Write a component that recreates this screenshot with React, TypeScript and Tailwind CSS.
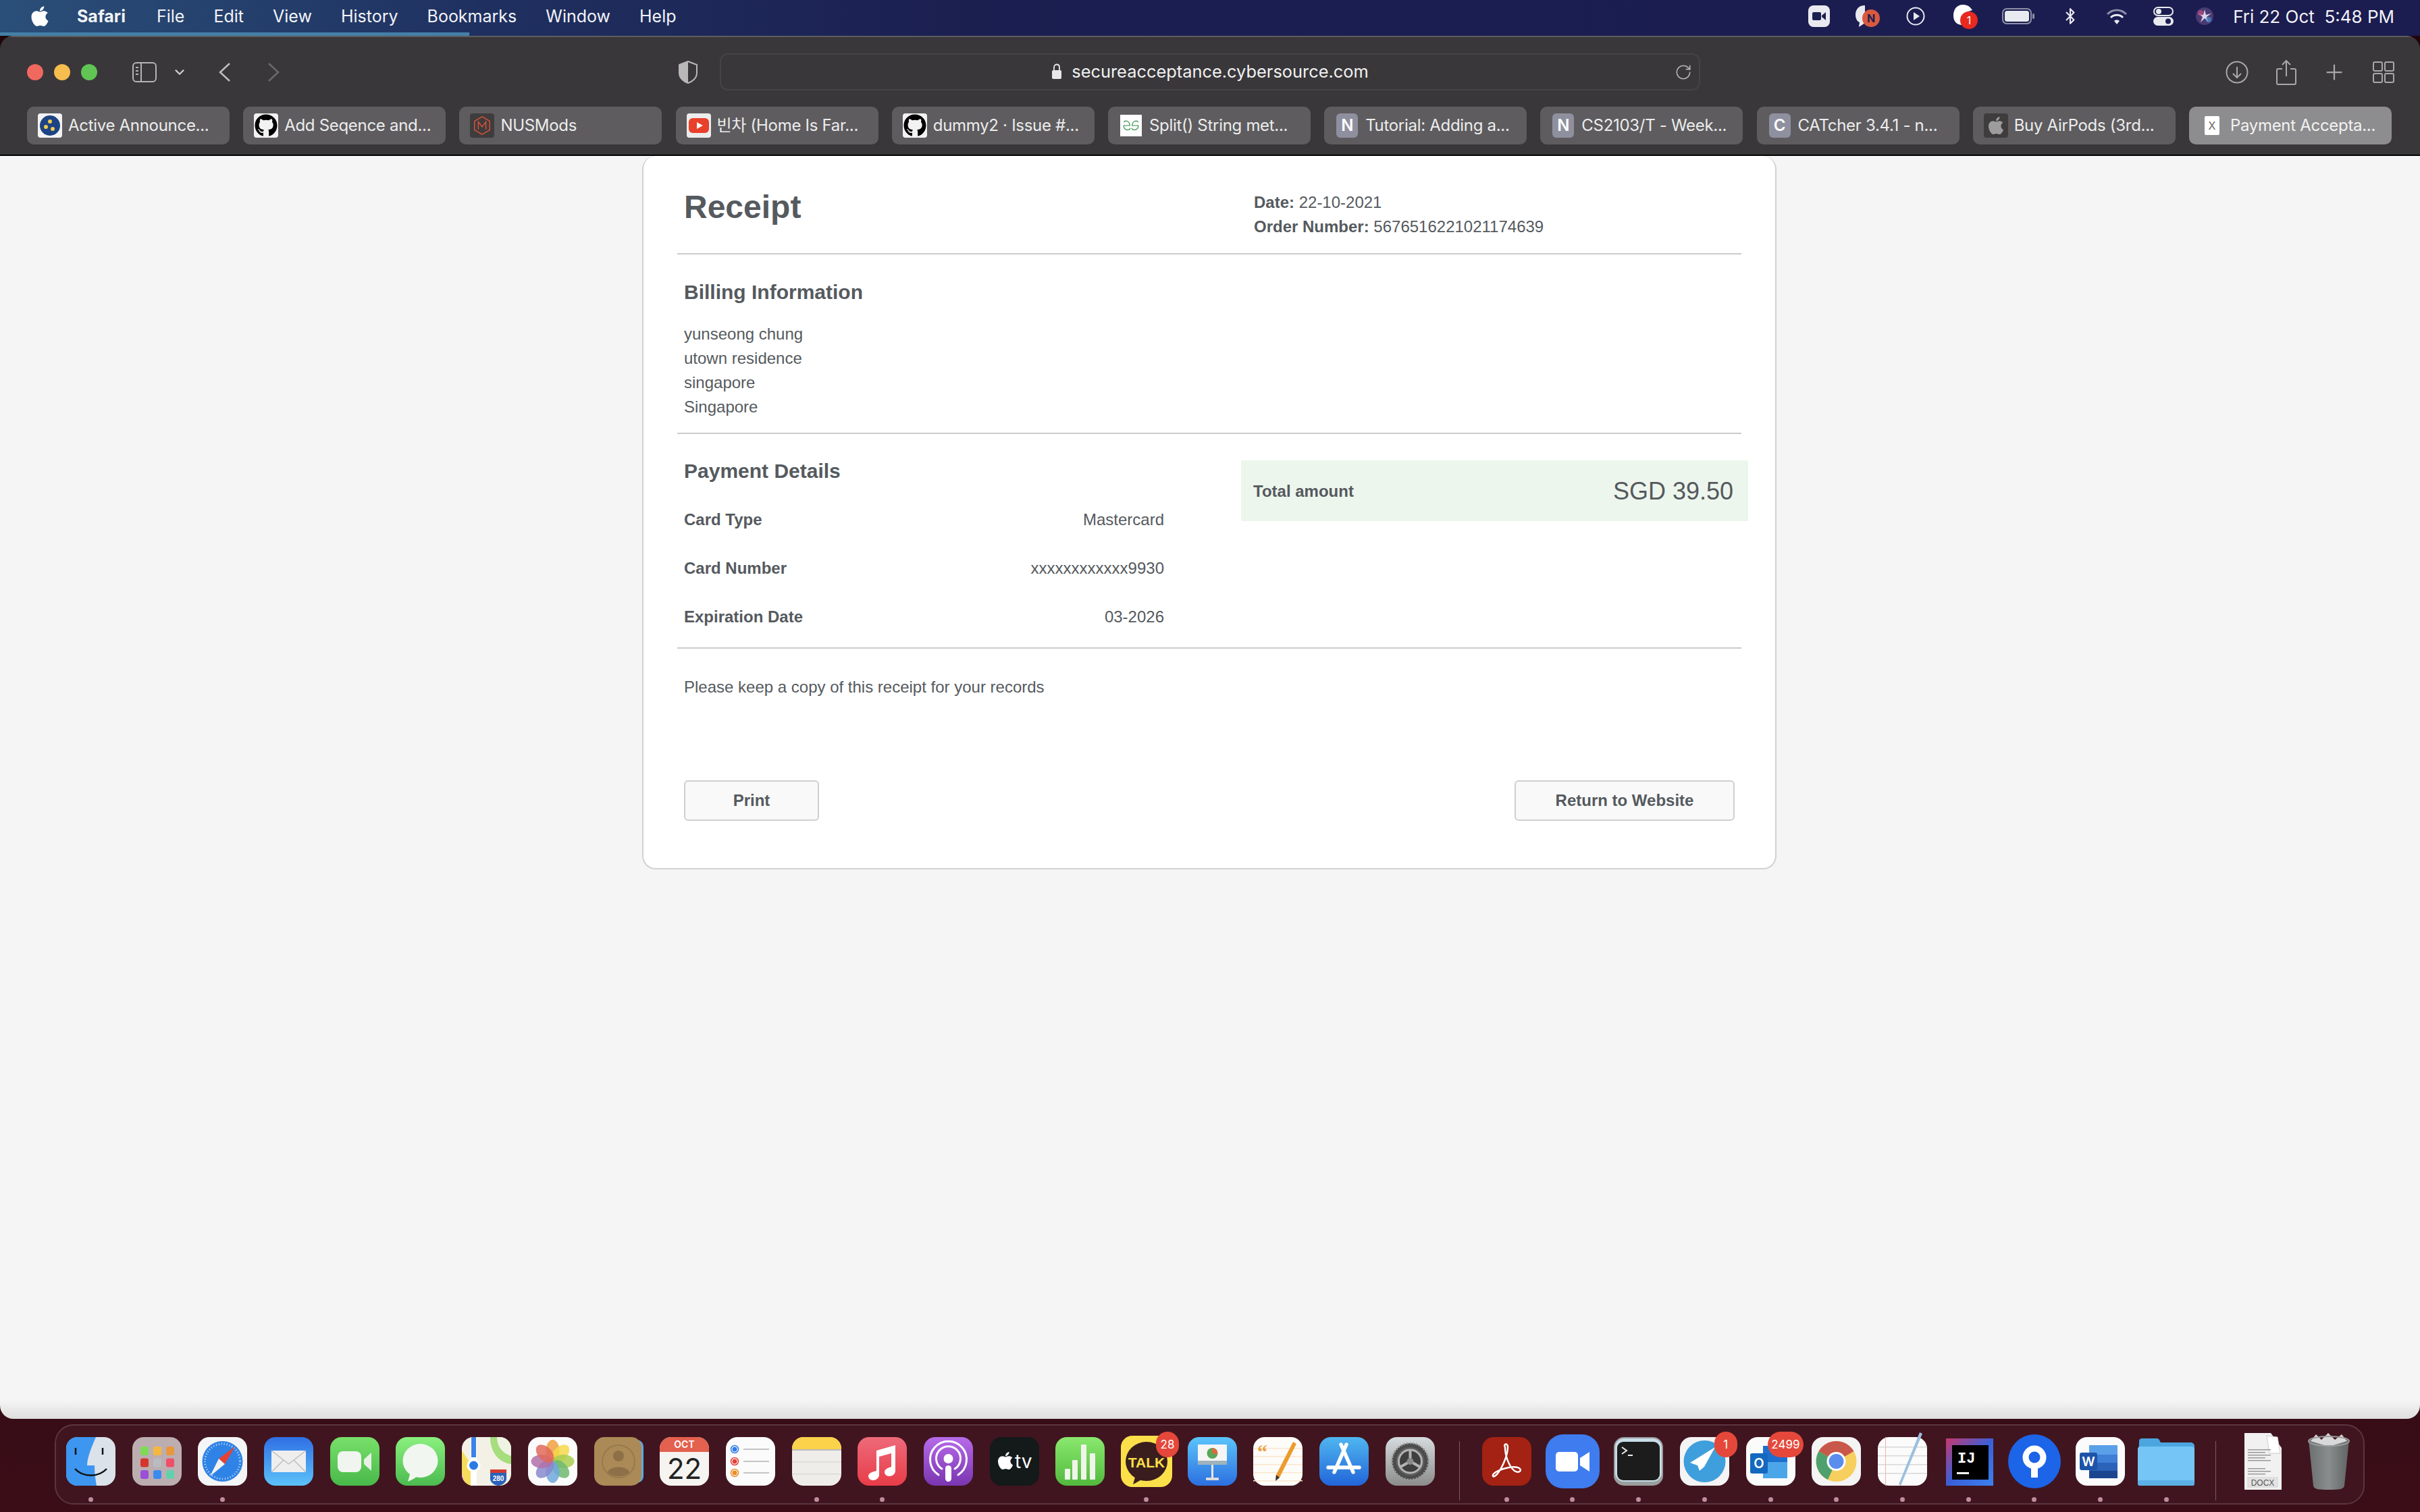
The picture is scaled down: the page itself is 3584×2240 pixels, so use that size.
import type { ReactNode } from "react";
import { FaApple, FaGithub } from "react-icons/fa";
import { Bluetooth, ChevronDown, Plus, RotateCw } from "lucide-react";

const Squircle = ({ fill, children }: { fill: string; children?: ReactNode }) => (
  <svg viewBox="0 0 73 72" className="w-[73px] h-[72px] overflow-visible">
    <rect x="0" y="0" width="73" height="72" rx="17" fill={fill} />
    {children}
  </svg>
);

const Grad = ({ id, from, to }: { id: string; from: string; to: string }) => (
  <defs>
    <linearGradient id={id} x1="0" y1="0" x2="0" y2="1">
      <stop offset="0" stopColor={from} />
      <stop offset="1" stopColor={to} />
    </linearGradient>
  </defs>
);

const Finder = () => (
  <svg viewBox="0 0 73 72" className="w-[73px] h-[72px]">
    <rect width="73" height="72" rx="17" fill="#dbe2ea" />
    <path d="M17 0H44C38 14 31 30 31 42H42C42 52 43 62 45 72H17C7 72 0 65 0 55V17C0 7 7 0 17 0Z" fill="#3d96f0" />
    <path d="M14 16v10M54 16v10" stroke="#111" strokeWidth="2.5" />
    <path d="M13 47C25 60 48 60 60 47" stroke="#111" strokeWidth="2.5" fill="none" />
  </svg>
);

const Launchpad = () => {
  const cells = ["#7ed957", "#f5b73d", "#e9973c", "#d5362c", "#b8bcc0", "#ee5068", "#9a50d8", "#3a8cf0", "#63d0ac"];
  return (
    <Squircle fill="#bcaeb0">
      {cells.map((c, i) => (
        <rect key={c} x={12 + (i % 3) * 19} y={14 + Math.floor(i / 3) * 17.5} width="12" height="13" rx="3" fill={c} />
      ))}
    </Squircle>
  );
};

const SafariIcon = () => (
  <Squircle fill="#f4f5f6">
    <circle cx="36.5" cy="36" r="30" fill="#2f83e6" />
    <circle cx="36.5" cy="36" r="26" fill="none" stroke="#cfe3fa" strokeWidth="3" strokeDasharray="1 3" />
    <path d="M55 14L31 32L40 40Z" fill="#ea3f34" />
    <path d="M18 58L31 32L40 40Z" fill="#f3f3f3" />
  </Squircle>
);

const Mail = () => (
  <svg viewBox="0 0 73 72" className="w-[73px] h-[72px]">
    <Grad id="mailG" from="#2f6fe4" to="#5cc2fa" />
    <rect width="73" height="72" rx="17" fill="url(#mailG)" />
    <rect x="11" y="20" width="51" height="32" rx="2" fill="#eeeeee" />
    <path d="M11 20L36.5 40L62 20M11 52L29 34M62 52L44 34" stroke="#b9b9b9" strokeWidth="1.2" fill="none" />
  </svg>
);

const FaceTime = () => (
  <svg viewBox="0 0 73 72" className="w-[73px] h-[72px]">
    <Grad id="ftG" from="#78e06a" to="#48b94a" />
    <rect width="73" height="72" rx="17" fill="url(#ftG)" />
    <rect x="11" y="21" width="35" height="31" rx="8" fill="#f1f5f0" />
    <path d="M50 33L61 23V50L50 40Z" fill="#e8f0e6" />
  </svg>
);

const Messages = () => (
  <svg viewBox="0 0 73 72" className="w-[73px] h-[72px]">
    <Grad id="msgG" from="#8af07e" to="#4cbb50" />
    <rect width="73" height="72" rx="17" fill="url(#msgG)" />
    <ellipse cx="36.5" cy="35" rx="26" ry="25" fill="#f2f6f0" />
    <path d="M22 52L18 66C25 63 30 60 33 57Z" fill="#f2f6f0" />
  </svg>
);

const Maps = () => (
  <svg viewBox="0 0 73 72" className="w-[73px] h-[72px]">
    <clipPath id="mapC"><rect width="73" height="72" rx="17" /></clipPath>
    <g clipPath="url(#mapC)">
      <rect width="73" height="72" fill="#f3f1e6" />
      <path d="M42 0H73V40C56 38 42 24 42 0Z" fill="#a6dd7d" />
      <path d="M52 0H73V28C60 24 52 14 52 0Z" fill="#eff3e3" />
      <path d="M0 20L16 44V72H0Z" fill="#f6dc5c" />
      <path d="M0 52L6 72H0Z" fill="#f7b8c4" />
      <rect x="13" y="0" width="9" height="72" fill="#fff" />
      <rect x="14" y="0" width="7" height="30" fill="#3b82e8" />
      <circle cx="17.5" cy="42" r="10" fill="#fff" />
      <circle cx="17.5" cy="42" r="6.5" fill="#2a7be4" />
      <path d="M42 48H66V62C66 68 58 72 54 72C50 72 42 68 42 62Z" fill="#2a62b8" />
      <rect x="42" y="48" width="24" height="5" fill="#d23a34" />
      <text x="54" y="65" textAnchor="middle" fontSize="10" fontWeight="700" fontFamily="Liberation Sans, sans-serif" fill="#fff">280</text>
    </g>
  </svg>
);

const Photos = () => {
  const colors = ["#f0a040", "#f6d84a", "#a8cc50", "#6fb870", "#6fa8dc", "#8888cc", "#b070a8", "#e06a5a"];
  return (
    <Squircle fill="#fbfbfb">
      {colors.map((c, i) => (
        <ellipse key={c} cx="36.5" cy="20" rx="10" ry="16" fill={c} opacity="0.85" transform={`rotate(${i * 45} 36.5 36)`} />
      ))}
    </Squircle>
  );
};

const Contacts = () => (
  <svg viewBox="0 0 73 72" className="w-[73px] h-[72px]">
    <rect x="8" y="4" width="65" height="64" rx="10" fill="#5fa9e2" />
    <rect width="70" height="72" rx="15" fill="#ab8a57" />
    <circle cx="36" cy="36" r="24" fill="none" stroke="#977a4d" strokeWidth="2" />
    <circle cx="36" cy="28" r="8" fill="#8d7047" />
    <path d="M20 52C22 42 50 42 52 52C46 60 26 60 20 52Z" fill="#8d7047" />
  </svg>
);

const Calendar = () => (
  <svg viewBox="0 0 73 72" className="w-[73px] h-[72px]">
    <clipPath id="calC"><rect width="73" height="72" rx="17" /></clipPath>
    <g clipPath="url(#calC)">
      <rect width="73" height="72" fill="#f5f4f1" />
      <rect width="73" height="22" fill="#e4604f" />
    </g>
    <text x="36.5" y="16" textAnchor="middle" fontSize="14" fontWeight="600" fontFamily="Inter, sans-serif" fill="#fff">OCT</text>
    <text x="36.5" y="62" textAnchor="middle" fontSize="42" fontFamily="Inter, sans-serif" fill="#222">22</text>
  </svg>
);

const Reminders = () => (
  <Squircle fill="#fbfbfb">
    {[["#2f7de6", 18], ["#e5413a", 36], ["#ea8c25", 53]].map(([c, y]) => (
      <g key={String(c)}>
        <circle cx="13" cy={Number(y)} r="5.5" fill="#fff" stroke={String(c)} strokeWidth="1.5" />
        <circle cx="13" cy={Number(y)} r="3.5" fill={String(c)} />
        <rect x="26" y={Number(y) - 1} width="38" height="2" fill="#c4c4c4" />
      </g>
    ))}
  </Squircle>
);

const Notes = () => (
  <svg viewBox="0 0 73 72" className="w-[73px] h-[72px]">
    <clipPath id="notesC"><rect width="73" height="72" rx="17" /></clipPath>
    <g clipPath="url(#notesC)">
      <rect width="73" height="72" fill="#efedea" />
      <rect width="73" height="18" fill="#fbd24a" />
      <rect y="18" width="73" height="2" fill="#bbb" />
      <rect y="36" width="73" height="1.5" fill="#dcdad6" />
      <rect y="54" width="73" height="1.5" fill="#dcdad6" />
    </g>
  </svg>
);

const Music = () => (
  <svg viewBox="0 0 73 72" className="w-[73px] h-[72px]">
    <Grad id="musG" from="#ee6a7a" to="#e83c48" />
    <rect width="73" height="72" rx="17" fill="url(#musG)" />
    <path d="M28 20L56 12V50C56 55 51 58 47 58C43 58 40 55 40 52C40 48 44 46 50 44V24L32 29V56C32 61 27 64 23 64C19 64 16 61 16 58C16 54 20 52 28 50Z" fill="#fff" />
  </svg>
);

const Podcasts = () => (
  <svg viewBox="0 0 73 72" className="w-[73px] h-[72px]">
    <Grad id="podG" from="#b76bea" to="#7a35b0" />
    <rect width="73" height="72" rx="17" fill="url(#podG)" />
    <path d="M22 56A27 27 0 1 1 51 56M27 47A18 18 0 1 1 46 47" fill="none" stroke="#fff" strokeWidth="3" strokeLinecap="round" />
    <circle cx="36.5" cy="32" r="7" fill="#fff" />
    <rect x="32" y="42" width="9" height="24" rx="4.5" fill="#fff" />
  </svg>
);

const AppleTv = () => (
  <Squircle fill="#14191a">
    <foreignObject x="9" y="20" width="28" height="30">
      <FaApple className="w-[28px] h-[30px] text-white" />
    </foreignObject>
    <text x="37" y="46" fontSize="28" fontFamily="Inter, sans-serif" fill="#fff">tv</text>
  </Squircle>
);

const Numbers = () => (
  <svg viewBox="0 0 73 72" className="w-[73px] h-[72px]">
    <Grad id="numG" from="#8ae86e" to="#52b93e" />
    <rect width="73" height="72" rx="17" fill="url(#numG)" />
    <rect x="14" y="47" width="8" height="16" rx="1" fill="#f0f4ea" />
    <rect x="25" y="34" width="8" height="29" rx="1" fill="#f0f4ea" />
    <rect x="38" y="11" width="8" height="52" rx="1" fill="#f0f4ea" />
    <rect x="51" y="24" width="8" height="39" rx="1" fill="#f0f4ea" />
  </svg>
);

const Talk = () => (
  <svg viewBox="0 0 76 76" className="w-[76px] h-[76px] -mt-[2px] -mx-[1.5px] overflow-visible">
    <rect width="76" height="76" rx="17" fill="#fbe04a" />
    <ellipse cx="38" cy="38" rx="31" ry="29" fill="#3a1e1e" />
    <path d="M22 58L18 72C26 68 32 64 36 62Z" fill="#3a1e1e" />
    <text x="38" y="47" textAnchor="middle" fontSize="21" fontWeight="700" fontFamily="Liberation Sans, sans-serif" fill="#fbe04a">TALK</text>
  </svg>
);

const Keynote = () => (
  <svg viewBox="0 0 73 72" className="w-[73px] h-[72px]">
    <Grad id="keyG" from="#5bc4fb" to="#2c6fe0" />
    <rect width="73" height="72" rx="17" fill="url(#keyG)" />
    <rect x="15" y="11" width="43" height="30" rx="1" fill="#f5f5f5" />
    <rect x="15" y="35" width="43" height="6" fill="#9fb3bd" />
    <circle cx="36.5" cy="24" r="8" fill="#5aa65a" />
    <path d="M36.5 24V16A8 8 0 0 1 44 26Z" fill="#e2683c" />
    <rect x="35" y="41" width="3" height="22" fill="#e8e8e8" />
    <rect x="27" y="60" width="19" height="4" rx="1" fill="#dcdcdc" />
  </svg>
);

const Pages = () => (
  <Squircle fill="#fdfcf8">
    {[16, 28, 40, 52, 64].map((y) => (
      <rect key={y} x="0" y={y} width="73" height="1.5" fill="#fbe6cf" />
    ))}
    <text x="6" y="32" fontSize="30" fontWeight="700" fontFamily="Liberation Serif, serif" fill="#eca13f">“</text>
    <path d="M59 7L64 10L39 60L33 63L34 56Z" fill="#ee9a2e" />
    <path d="M34 56L39 60L33 65Z" fill="#333" />
  </Squircle>
);

const AppStore = () => (
  <svg viewBox="0 0 73 72" className="w-[73px] h-[72px]">
    <Grad id="asG" from="#4fb6f0" to="#2265d8" />
    <rect width="73" height="72" rx="17" fill="url(#asG)" />
    <path d="M40 11L22 52M32 11L50 52" stroke="#fff" strokeWidth="5.5" strokeLinecap="round" />
    <path d="M13 45H59" stroke="#fff" strokeWidth="5.5" strokeLinecap="round" />
  </svg>
);

const Settings = () => (
  <svg viewBox="0 0 73 72" className="w-[73px] h-[72px]">
    <Grad id="spG" from="#d6dbdd" to="#8c8c8c" />
    <rect width="73" height="72" rx="17" fill="url(#spG)" />
    <circle cx="36.5" cy="36" r="27" fill="#4c4c4c" />
    <circle cx="36.5" cy="36" r="27" fill="none" stroke="#9a9a9a" strokeWidth="3" strokeDasharray="2 2.5" />
    <circle cx="36.5" cy="36" r="21" fill="#606060" />
    <circle cx="36.5" cy="36" r="17" fill="#3f3f3f" stroke="#b4b4b4" strokeWidth="3" />
    <path d="M36.5 36L36.5 19M36.5 36L21.5 44.5M36.5 36L51.5 44.5" stroke="#b4b4b4" strokeWidth="4" />
    <circle cx="36.5" cy="36" r="5" fill="#8a8a8a" />
  </svg>
);

const Acrobat = () => (
  <svg viewBox="0 0 73 72" className="w-[73px] h-[72px]">
    <rect width="73" height="72" rx="17" fill="#a32213" />
    <path d="M34 15C31 10 38 8 38 15C38 28 28 50 20 57C15 61 14 56 20 52C30 46 48 42 55 46C60 50 54 54 48 50C40 44 34 28 34 15Z" fill="none" stroke="#fff" strokeWidth="2.5" />
  </svg>
);

const ZoomApp = () => (
  <svg viewBox="0 0 80 80" className="w-[80px] h-[80px] -mt-[4px] -mx-[3.5px] overflow-visible">
    <rect width="80" height="80" rx="26" fill="#3f7cf0" />
    <rect x="15" y="26" width="33" height="29" rx="5" fill="#fff" />
    <path d="M51 35L65 26V55L51 46Z" fill="#fff" />
  </svg>
);

const Terminal = () => (
  <svg viewBox="0 0 73 72" className="w-[73px] h-[72px]">
    <rect width="73" height="72" rx="15" fill="#9a9e9e" />
    <rect x="2" y="2" width="69" height="64" rx="13" fill="#c8dce6" />
    <rect x="5" y="7" width="63" height="57" rx="9" fill="#1c1c1c" />
    <path d="M12 15L19 20L12 25M21 27H28" stroke="#eee" strokeWidth="2" fill="none" />
  </svg>
);

const Telegram = () => (
  <Squircle fill="#f4f4f4">
    <circle cx="36.5" cy="36" r="31" fill="#3f9fdc" />
    <path d="M52 15L15 38L26 42L29 50L36 44Z" fill="#fff" />
  </Squircle>
);

const Outlook = () => (
  <Squircle fill="#fbfbfb">
    <rect x="25" y="13" width="36" height="28" fill="#1d6fcf" />
    <rect x="25" y="37" width="36" height="24" fill="#4aa6e8" />
    <rect x="6" y="24" width="26" height="30" rx="3" fill="#1468be" />
    <text x="19" y="46" textAnchor="middle" fontSize="20" fontWeight="600" fontFamily="Inter, sans-serif" fill="#fff">O</text>
  </Squircle>
);

const Chrome = () => (
  <Squircle fill="#f4f4f4">
    <circle cx="36.5" cy="36" r="30" fill="#f7cf5e" />
    <path d="M36.5 36L10.5 21A30 30 0 0 1 62.5 21Z" fill="#c8584a" />
    <path d="M36.5 36L10.5 21A30 30 0 0 0 24 63Z" fill="#4ea06c" />
    <circle cx="36.5" cy="36" r="14" fill="#fff" />
    <circle cx="36.5" cy="36" r="11" fill="#5b8def" />
  </Squircle>
);

const TextEdit = () => (
  <svg viewBox="0 0 73 72" className="w-[73px] h-[72px] overflow-visible">
    <rect width="73" height="72" rx="17" fill="#fbfbfb" />
    {[14, 27, 40, 53].map((y) => (
      <rect key={y} y={y} width="73" height="1.5" fill="#d8d8d8" />
    ))}
    <rect x="11" y="0" width="1" height="72" fill="#f0b0b0" />
    <path d="M62 -7L66 -5L34 72L31 70Z" fill="#9cc0de" />
  </svg>
);

const Idea = () => (
  <svg viewBox="0 0 73 72" className="w-[73px] h-[72px]">
    <defs>
      <linearGradient id="ijG" x1="0" y1="0" x2="1" y2="1">
        <stop offset="0" stopColor="#c8386e" />
        <stop offset="0.5" stopColor="#3a5fd8" />
        <stop offset="1" stopColor="#3b82f0" />
      </linearGradient>
    </defs>
    <rect x="3" y="2" width="71" height="70" fill="url(#ijG)" />
    <rect x="12" y="12" width="54" height="51" fill="#000" />
    <text x="20" y="38" fontSize="22" fontWeight="700" fontFamily="Liberation Mono, monospace" fill="#fff">IJ</text>
    <rect x="19" y="52" width="18" height="3" fill="#fff" />
  </svg>
);

const Sourcetree = () => (
  <svg viewBox="0 0 78 80" className="w-[78px] h-[80px] -mt-[4px] -mx-[2.5px] overflow-visible">
    <ellipse cx="39" cy="40" rx="39" ry="40" fill="#1c64e8" />
    <circle cx="39" cy="34" r="13" fill="none" stroke="#fff" strokeWidth="9" />
    <rect x="34" y="44" width="10" height="20" fill="#fff" />
  </svg>
);

const Word = () => (
  <Squircle fill="#fbfbfb">
    <rect x="20" y="12" width="42" height="14" fill="#5aa0e8" />
    <rect x="20" y="26" width="42" height="12" fill="#3f7fd6" />
    <rect x="20" y="38" width="42" height="12" fill="#2b63b8" />
    <rect x="20" y="50" width="42" height="11" fill="#1c4590" />
    <rect x="6" y="23" width="26" height="26" rx="3" fill="#1d54a8" />
    <text x="19" y="43" textAnchor="middle" fontSize="19" fontWeight="600" fontFamily="Inter, sans-serif" fill="#fff">W</text>
  </Squircle>
);

const Folder = () => (
  <svg viewBox="0 0 84 72" className="w-[84px] h-[72px] -mx-[5.5px]">
    <path d="M2 6C2 3 4 2 6 2H28C31 2 32 4 34 8H78C81 8 84 10 84 13V66C84 70 81 72 78 72H6C3 72 0 70 0 66Z" fill="#4ba6df" />
    <rect x="0" y="14" width="84" height="58" rx="4" fill="#75c5f7" />
    <rect x="0" y="64" width="84" height="8" rx="3" fill="#5cb0e6" />
  </svg>
);

const Doc = () => (
  <svg viewBox="0 0 60 84" className="w-[60px] h-[84px] -mt-[6px]">
    <path d="M3 0H42L58 22V84H3Z" fill="#f1f1f1" />
    <path d="M36 4L52 6L56 30H40Z" fill="#fff" stroke="#ccc" />
    {[24, 28, 32, 36, 40, 52, 56, 60].map((y) => (
      <rect key={y} x="8" y={y} width={y % 8 ? 26 : 34} height="1.5" fill="#999" />
    ))}
    <rect x="8" y="66" width="44" height="14" fill="#e4e4e4" stroke="#bbb" strokeWidth="0.5" />
    <text x="30" y="78" textAnchor="middle" fontSize="12" fontFamily="Liberation Sans, sans-serif" fill="#555">DOCX</text>
  </svg>
);

const Trash = () => (
  <svg viewBox="0 0 66 84" className="w-[66px] h-[84px] -mt-[6px]">
    <defs>
      <linearGradient id="trG" x1="0" y1="0" x2="1" y2="0">
        <stop offset="0" stopColor="#6c6f70" />
        <stop offset="0.5" stopColor="#8a8d8e" />
        <stop offset="1" stopColor="#606364" />
      </linearGradient>
    </defs>
    <path d="M3 10H63L56 78C55 83 50 84 33 84C16 84 11 83 10 78Z" fill="url(#trG)" />
    <path d="M6 12L14 2L22 10L32 0L42 10L52 2L60 12L33 20Z" fill="#d8d8d8" />
    <ellipse cx="33" cy="12" rx="30" ry="7" fill="none" stroke="#9a9c9d" strokeWidth="2" />
  </svg>
);

const dockApps: { icon: ReactNode; dot?: boolean; badge?: string }[] = [
  { icon: <Finder />, dot: true },
  { icon: <Launchpad /> },
  { icon: <SafariIcon />, dot: true },
  { icon: <Mail /> },
  { icon: <FaceTime /> },
  { icon: <Messages /> },
  { icon: <Maps /> },
  { icon: <Photos /> },
  { icon: <Contacts /> },
  { icon: <Calendar /> },
  { icon: <Reminders /> },
  { icon: <Notes />, dot: true },
  { icon: <Music />, dot: true },
  { icon: <Podcasts /> },
  { icon: <AppleTv /> },
  { icon: <Numbers /> },
  { icon: <Talk />, dot: true, badge: "28" },
  { icon: <Keynote /> },
  { icon: <Pages /> },
  { icon: <AppStore /> },
  { icon: <Settings /> },
];

const dockRunning: { icon: ReactNode; dot?: boolean; badge?: string }[] = [
  { icon: <Acrobat />, dot: true },
  { icon: <ZoomApp />, dot: true },
  { icon: <Terminal />, dot: true },
  { icon: <Telegram />, dot: true, badge: "1" },
  { icon: <Outlook />, dot: true, badge: "2499" },
  { icon: <Chrome />, dot: true },
  { icon: <TextEdit />, dot: true },
  { icon: <Idea />, dot: true },
  { icon: <Sourcetree />, dot: true },
  { icon: <Word />, dot: true },
  { icon: <Folder />, dot: true },
];

const DockItem = ({ icon, dot, badge }: { icon: ReactNode; dot?: boolean; badge?: string }) => (
  <div className="relative w-[73px] flex flex-col items-center">
    <div className="h-[72px] flex items-start justify-center">{icon}</div>
    <div className={`mt-[17px] w-[7px] h-[7px] rounded-full ${dot ? "bg-[#c08c9c]" : "bg-transparent"}`} />
    {badge && (
      <div className="absolute -top-[8px] right-[-12px] min-w-[34px] h-[38px] px-[5px] rounded-full bg-[#e5483a] text-white text-[17px] leading-[38px] text-center font-['Inter',sans-serif]">
        {badge}
      </div>
    )}
  </div>
);

const Favicon = ({ kind }: { kind: string }) => {
  if (kind === "notion" || kind === "catcher") {
    return (
      <div className="w-[32px] h-[36px] rounded-[6px] bg-[#8f909f] text-white text-[24px] leading-[36px] text-center font-semibold">
        {kind === "notion" ? "N" : "C"}
      </div>
    );
  }
  if (kind === "github") {
    return (
      <div className="w-[36px] h-[36px] rounded-[4px] bg-[#f2f2f2] flex items-center justify-center">
        <FaGithub className="w-[34px] h-[34px] text-black" />
      </div>
    );
  }
  if (kind === "luminus") {
    return (
      <div className="w-[36px] h-[36px] rounded-[4px] bg-[#f2f2f2] flex items-center justify-center">
        <svg viewBox="0 0 32 32" className="w-[32px] h-[32px]">
          <circle cx="16" cy="16" r="15" fill="#1d4384" />
          <circle cx="16" cy="10" r="3" fill="#f2c94c" />
          <circle cx="10" cy="18" r="3" fill="#f2c94c" />
          <circle cx="20" cy="21" r="3" fill="#f2c94c" />
        </svg>
      </div>
    );
  }
  if (kind === "nusmods") {
    return (
      <div className="w-[36px] h-[36px] rounded-[4px] bg-[#3e3c3d] flex items-center justify-center">
        <svg viewBox="0 0 32 32" className="w-[30px] h-[32px]">
          <path d="M16 2L28 9V23L16 30L4 23V9Z" fill="none" stroke="#e0523a" strokeWidth="1.5" />
          <path d="M10 22V10L16 18L22 10V22" fill="none" stroke="#e0523a" strokeWidth="1.5" />
        </svg>
      </div>
    );
  }
  if (kind === "youtube") {
    return (
      <div className="w-[36px] h-[36px] rounded-[4px] bg-[#ececec] flex items-center justify-center">
        <svg viewBox="0 0 32 32" className="w-[32px] h-[32px]">
          <rect x="1" y="5" width="30" height="22" rx="6" fill="#e8402a" />
          <path d="M13 11L22 16L13 21Z" fill="#fff" />
        </svg>
      </div>
    );
  }
  if (kind === "gfg") {
    return (
      <div className="w-[32px] h-[32px] bg-white flex items-center justify-center">
        <svg viewBox="0 0 32 24" className="w-[28px] h-[20px]">
          <path d="M3 6C6 2 13 3 14 12H3C3 20 12 22 15 17M29 6C26 2 19 3 18 12H29C29 20 20 22 17 17" fill="none" stroke="#2f8d46" strokeWidth="1.4" />
        </svg>
      </div>
    );
  }
  if (kind === "apple") {
    return (
      <div className="w-[36px] h-[36px] rounded-[4px] bg-[#3e3c3d] flex items-center justify-center">
        <FaApple className="w-[28px] h-[30px] text-[#9d9d9d]" />
      </div>
    );
  }
  return (
    <div className="w-[22px] h-[28px] rounded-[2px] bg-white text-[#666] text-[16px] leading-[28px] text-center">X</div>
  );
};

const tabs = [
  { title: "Active Announce...", kind: "luminus" },
  { title: "Add Seqence and...", kind: "github" },
  { title: "NUSMods", kind: "nusmods" },
  { title: "빈차 (Home Is Far...", kind: "youtube" },
  { title: "dummy2 · Issue #...", kind: "github" },
  { title: "Split() String met...", kind: "gfg" },
  { title: "Tutorial: Adding a...", kind: "notion" },
  { title: "CS2103/T - Week...", kind: "notion" },
  { title: "CATcher 3.4.1 - n...", kind: "catcher" },
  { title: "Buy AirPods (3rd...", kind: "apple" },
  { title: "Payment Accepta...", kind: "cyber" },
];

const StatusIcons = () => (
  <div className="flex items-center text-[#e9eaf0]">
    {/* zoom */}
    <svg viewBox="0 0 32 32" className="w-[32px] h-[32px]">
      <rect width="32" height="32" rx="8" fill="#e9eaf0" />
      <rect x="6" y="10" width="13" height="12" rx="2" fill="#1b1f50" />
      <path d="M20 15L26 10V22L20 17Z" fill="#1b1f50" />
    </svg>
    {/* chat */}
    <svg viewBox="0 0 36 32" className="w-[36px] h-[32px] ml-[38px]">
      <path d="M14 0C3 0 0 8 0 14C0 20 3 24 6 25L5 32L14 26Z" fill="#e9eaf0" />
      <circle cx="23" cy="19" r="13" fill="#d9593f" />
      <text x="23" y="25" textAnchor="middle" fontSize="16" fontWeight="700" fontFamily="Inter, sans-serif" fill="#1b1f50">N</text>
    </svg>
    {/* play */}
    <svg viewBox="0 0 28 28" className="w-[28px] h-[28px] ml-[39px]">
      <circle cx="14" cy="14" r="12.5" fill="none" stroke="#e9eaf0" strokeWidth="2" />
      <path d="M11 8L20 14L11 20Z" fill="#e9eaf0" />
    </svg>
    {/* badge app */}
    <div className="relative ml-[42px] w-[36px] h-[34px]">
      <svg viewBox="0 0 32 32" className="w-[32px] h-[32px]">
        <path d="M14 0C4 0 0 8 0 16C0 24 4 30 14 30L22 20L16 12L28 8C24 2 20 0 14 0Z" fill="#fff" />
      </svg>
      <div className="absolute right-0 top-[10px] w-[26px] h-[26px] rounded-full bg-[#e8291f] text-white text-[16px] leading-[26px] text-center font-['Inter',sans-serif]">1</div>
    </div>
    {/* battery */}
    <svg viewBox="0 0 50 24" className="w-[50px] h-[24px] ml-[36px]">
      <rect x="1" y="1" width="42" height="22" rx="6" fill="none" stroke="#8f91a8" strokeWidth="2" />
      <rect x="4" y="4" width="36" height="16" rx="3.5" fill="#e9eaf0" />
      <rect x="45" y="8" width="3" height="8" rx="1.5" fill="#8f91a8" />
    </svg>
    <Bluetooth className="w-[26px] h-[30px] ml-[38px]" strokeWidth={2} />
    {/* wifi */}
    <svg viewBox="0 0 32 24" className="w-[32px] h-[24px] ml-[40px]">
      <path d="M2 9C10 1 22 1 30 9" fill="none" stroke="#8c8ea8" strokeWidth="3" />
      <path d="M7 14C12 9 20 9 25 14" fill="none" stroke="#e9eaf0" strokeWidth="3" />
      <path d="M12 19C14 17 18 17 20 19L16 24Z" fill="#e9eaf0" />
    </svg>
    {/* control centre */}
    <svg viewBox="0 0 30 28" className="w-[30px] h-[28px] ml-[38px]">
      <rect x="1" y="1" width="28" height="12" rx="6" fill="none" stroke="#e9eaf0" strokeWidth="2" />
      <circle cx="8" cy="7" r="4" fill="#e9eaf0" />
      <rect y="15" width="30" height="13" rx="6.5" fill="#e9eaf0" />
      <circle cx="22" cy="21.5" r="4" fill="#1b1f50" />
    </svg>
    {/* siri */}
    <svg viewBox="0 0 28 30" className="w-[28px] h-[30px] ml-[32px]">
      <circle cx="14" cy="15" r="13" fill="#4a3a72" />
      <path d="M14 5L16 13L24 11L17 16L20 24L14 18L8 24L11 16L4 11L12 13Z" fill="#d9d4ea" />
      <circle cx="8" cy="10" r="4" fill="#c04a80" opacity="0.7" />
      <circle cx="20" cy="20" r="4" fill="#4a90d0" opacity="0.7" />
    </svg>
  </div>
);

const App = () => {
  return (
    <div className="w-[3584px] h-[2240px] overflow-hidden flex flex-col bg-[linear-gradient(to_bottom,#1f0508,#3a0d17)] font-['Inter',sans-serif]">
      {/* Menu bar */}
      <div className="bg-[linear-gradient(to_right,#2a4f78,#1f3060_20%,#1b1f50_40%,#1b1c50)]">
        <div className="h-[48px] flex items-center pl-[44px] pr-[38px] text-[#f2f3f7] text-[25px]">
          <FaApple className="w-[30px] h-[34px] text-white" />
          <span className="ml-[40px] pt-[2px] font-bold">Safari</span>
          <div className="ml-[46px] pt-[2px] flex gap-[43px]">
            <span>File</span>
            <span>Edit</span>
            <span>View</span>
            <span>History</span>
            <span>Bookmarks</span>
            <span>Window</span>
            <span>Help</span>
          </div>
          <div className="ml-auto flex items-center gap-[28px]">
            <StatusIcons />
            <span className="whitespace-pre text-[26px]">Fri 22 Oct  5:48 PM</span>
          </div>
        </div>
        <div className="h-[5px] w-[695px] bg-[#4480a8]" />
      </div>

      {/* Browser window */}
      <div className="h-[2049px] shrink-0 rounded-[20px] overflow-hidden flex flex-col">
        <div className="h-[178px] bg-[#39373a] border-t-2 border-t-[#5e5d60] border-b-2 border-b-black pl-[40px]">
          <div className="h-[103px] flex items-center">
            <div className="flex gap-[16px]">
              <div className="w-[24px] h-[24px] rounded-full bg-[#f1685e]" />
              <div className="w-[24px] h-[24px] rounded-full bg-[#f6bd4f]" />
              <div className="w-[24px] h-[24px] rounded-full bg-[#61c554]" />
            </div>
            <svg viewBox="0 0 36 30" className="ml-[52px] w-[36px] h-[30px]">
              <rect x="1" y="1" width="34" height="28" rx="5" fill="none" stroke="#b4b4b5" strokeWidth="2" />
              <path d="M13 1V29" stroke="#b4b4b5" strokeWidth="2" />
              <path d="M5 8H9M5 13H9M5 18H9" stroke="#b4b4b5" strokeWidth="2" />
            </svg>
            <ChevronDown className="ml-[23px] w-[22px] h-[22px] text-[#cfcfcf]" strokeWidth={2.5} />
            <svg viewBox="0 0 20 30" className="ml-[46px] w-[20px] h-[30px]">
              <path d="M17 2L3 15L17 28" fill="none" stroke="#bdbdbd" strokeWidth="2.5" />
            </svg>
            <svg viewBox="0 0 20 30" className="ml-[52px] w-[20px] h-[30px]">
              <path d="M3 2L17 15L3 28" fill="none" stroke="#6a696b" strokeWidth="2.5" />
            </svg>
            <svg viewBox="0 0 28 34" className="ml-[590px] w-[28px] h-[34px]">
              <path d="M14 1L27 6V18C27 26 20 31 14 33C8 31 1 26 1 18V6Z" fill="none" stroke="#b8b8b8" strokeWidth="2" />
              <path d="M14 1L1 6V18C1 26 8 31 14 33Z" fill="#b8b8b8" />
            </svg>
            <div className="ml-[33px] w-[1452px] h-[55px] rounded-[12px] border-2 border-[#454346] flex items-center justify-center relative">
              <div className="flex items-center gap-[14px] text-[25.4px] text-[#f1f1f1]">
                <svg viewBox="0 0 16 24" className="w-[16px] h-[24px]">
                  <path d="M4 11V6C4 3 6 1.5 8 1.5C10 1.5 12 3 12 6V11" fill="none" stroke="#e8e8e8" strokeWidth="1.8" />
                  <rect x="1" y="10" width="14" height="13" rx="2" fill="#e8e8e8" />
                </svg>
                <span>secureacceptance.cybersource.com</span>
              </div>
              <RotateCw className="absolute right-[10px] top-[12px] w-[26px] h-[28px] text-[#b4b4b5]" strokeWidth={1.5} />
            </div>
            {/* right toolbar icons */}
            <svg viewBox="0 0 34 34" className="ml-[778px] w-[34px] h-[34px]">
              <circle cx="17" cy="17" r="15.5" fill="none" stroke="#a8a8a9" strokeWidth="2" />
              <path d="M17 9V25M11 19L17 25L23 19" fill="none" stroke="#a8a8a9" strokeWidth="2" />
            </svg>
            <svg viewBox="0 0 30 38" className="ml-[41px] w-[30px] h-[38px]">
              <path d="M9 14H3C1.5 14 1 15 1 16V35C1 36 2 37 3 37H27C28 37 29 36 29 35V16C29 15 28 14 27 14H21M15 25V2M9 8L15 2L21 8" fill="none" stroke="#a8a8a9" strokeWidth="2" />
            </svg>
            <Plus className="ml-[38px] w-[36px] h-[36px] text-[#a8a8a9]" strokeWidth={1.5} />
            <svg viewBox="0 0 32 32" className="ml-[39px] w-[32px] h-[32px]">
              <rect x="1" y="1" width="13" height="13" rx="2" fill="none" stroke="#a8a8a9" strokeWidth="2" />
              <rect x="18" y="1" width="13" height="13" rx="2" fill="none" stroke="#a8a8a9" strokeWidth="2" />
              <rect x="1" y="18" width="13" height="13" rx="2" fill="none" stroke="#a8a8a9" strokeWidth="2" />
              <rect x="18" y="18" width="13" height="13" rx="2" fill="none" stroke="#a8a8a9" strokeWidth="2" />
            </svg>
          </div>
          {/* Tabs */}
          <div className="flex gap-[20.2px]">
            {tabs.map((t, i) => (
              <div
                key={t.title}
                className={`w-[300px] h-[56px] rounded-[10px] flex items-center gap-[9px] pl-[16px] text-[24px] tracking-[-0.3px] whitespace-nowrap ${
                  i === tabs.length - 1 ? "bg-[#8d8c8e] text-[#f2f2f2]" : "bg-[#5e5c5f] text-[#ececec]"
                }`}
              >
                <div className="w-[36px] flex justify-center">
                  <Favicon kind={t.kind} />
                </div>
                <span className="font-['Inter','Noto_Sans_CJK_KR',sans-serif]">{t.title}</span>
              </div>
            ))}
          </div>
        </div>

        {/* Page */}
        <div className="flex-1 bg-[linear-gradient(to_bottom,#f5f5f5_98.5%,#dedede_100%)] pl-[951px] font-['Liberation_Sans',sans-serif] text-[#555a5e] text-[24px]">
          <div className="w-[1680px] h-[1057px] bg-white rounded-[20px] border-2 border-t-0 border-[#d2d2d2] px-[50px]">
            {/* Header */}
            <div className="h-[146px] border-b-2 border-[#cccccc] flex pl-[10px]">
              <h1 className="w-[844px] pt-[46px] text-[48px] leading-[60px] font-bold">Receipt</h1>
              <div className="pt-[51px] leading-[36px]">
                <p><b>Date:</b> 22-10-2021</p>
                <p><b>Order Number:</b> 5676516221021174639</p>
              </div>
            </div>

            {/* Billing */}
            <div className="h-[266px] border-b-2 border-[#cccccc] pl-[10px] pt-[36px]">
              <h2 className="text-[30px] leading-[40px] font-bold mb-[24px]">Billing Information</h2>
              <p className="leading-[36px]">yunseong chung</p>
              <p className="leading-[36px]">utown residence</p>
              <p className="leading-[36px]">singapore</p>
              <p className="leading-[36px]">Singapore</p>
            </div>

            {/* Payment */}
            <div className="h-[318px] border-b-2 border-[#cccccc] flex pl-[10px]">
              <div className="w-[712px] pt-[35px]">
                <h2 className="text-[30px] leading-[40px] font-bold mb-[16px]">Payment Details</h2>
                <div className="flex justify-between h-[72px] items-center"><b>Card Type</b><span>Mastercard</span></div>
                <div className="flex justify-between h-[72px] items-center"><b>Card Number</b><span>xxxxxxxxxxxx9930</span></div>
                <div className="flex justify-between h-[72px] items-center"><b>Expiration Date</b><span>03-2026</span></div>
              </div>
              <div className="ml-[114px] mt-[39px] -mr-[10px] w-[752px] h-[90px] bg-[#edf6ed] flex items-center justify-between pt-[2px] pl-[18px] pr-[22px]">
                <b>Total amount</b>
                <span className="text-[36px]">SGD 39.50</span>
              </div>
            </div>

            {/* Footer */}
            <p className="pl-[10px] pt-[39px] leading-[36px]">Please keep a copy of this receipt for your records</p>
            <div className="mt-[120px] px-[10px] flex justify-between">
              <button className="w-[200px] h-[60px] rounded-[6px] border-2 border-[#cfcfcf] bg-[#f9f9f9] font-bold">Print</button>
              <button className="w-[326px] h-[60px] rounded-[6px] border-2 border-[#cfcfcf] bg-[#f9f9f9] font-bold">Return to Website</button>
            </div>
          </div>
        </div>
      </div>

      {/* Dock */}
      <div className="mt-[8px] ml-[81px] w-[3421px] h-[119px] rounded-[28px] border-2 border-[#5a3540] bg-[#40151f] flex pt-[17px] pl-[15px]">
        <div className="flex gap-[24.7px]">
          {dockApps.map((a, i) => (
            <DockItem key={i} {...a} />
          ))}
        </div>
        <div className="ml-[36px] mt-[6px] w-[1px] h-[88px] bg-[#7a5a62]" />
        <div className="ml-[33px] flex gap-[24.7px]">
          {dockRunning.map((a, i) => (
            <DockItem key={i} {...a} />
          ))}
        </div>
        <div className="ml-[36px] mt-[6px] w-[1px] h-[88px] bg-[#7a5a62]" />
        <div className="ml-[33px] flex gap-[24.7px]">
          <DockItem icon={<Doc />} />
          <DockItem icon={<Trash />} />
        </div>
      </div>
    </div>
  );
};

export default App;
